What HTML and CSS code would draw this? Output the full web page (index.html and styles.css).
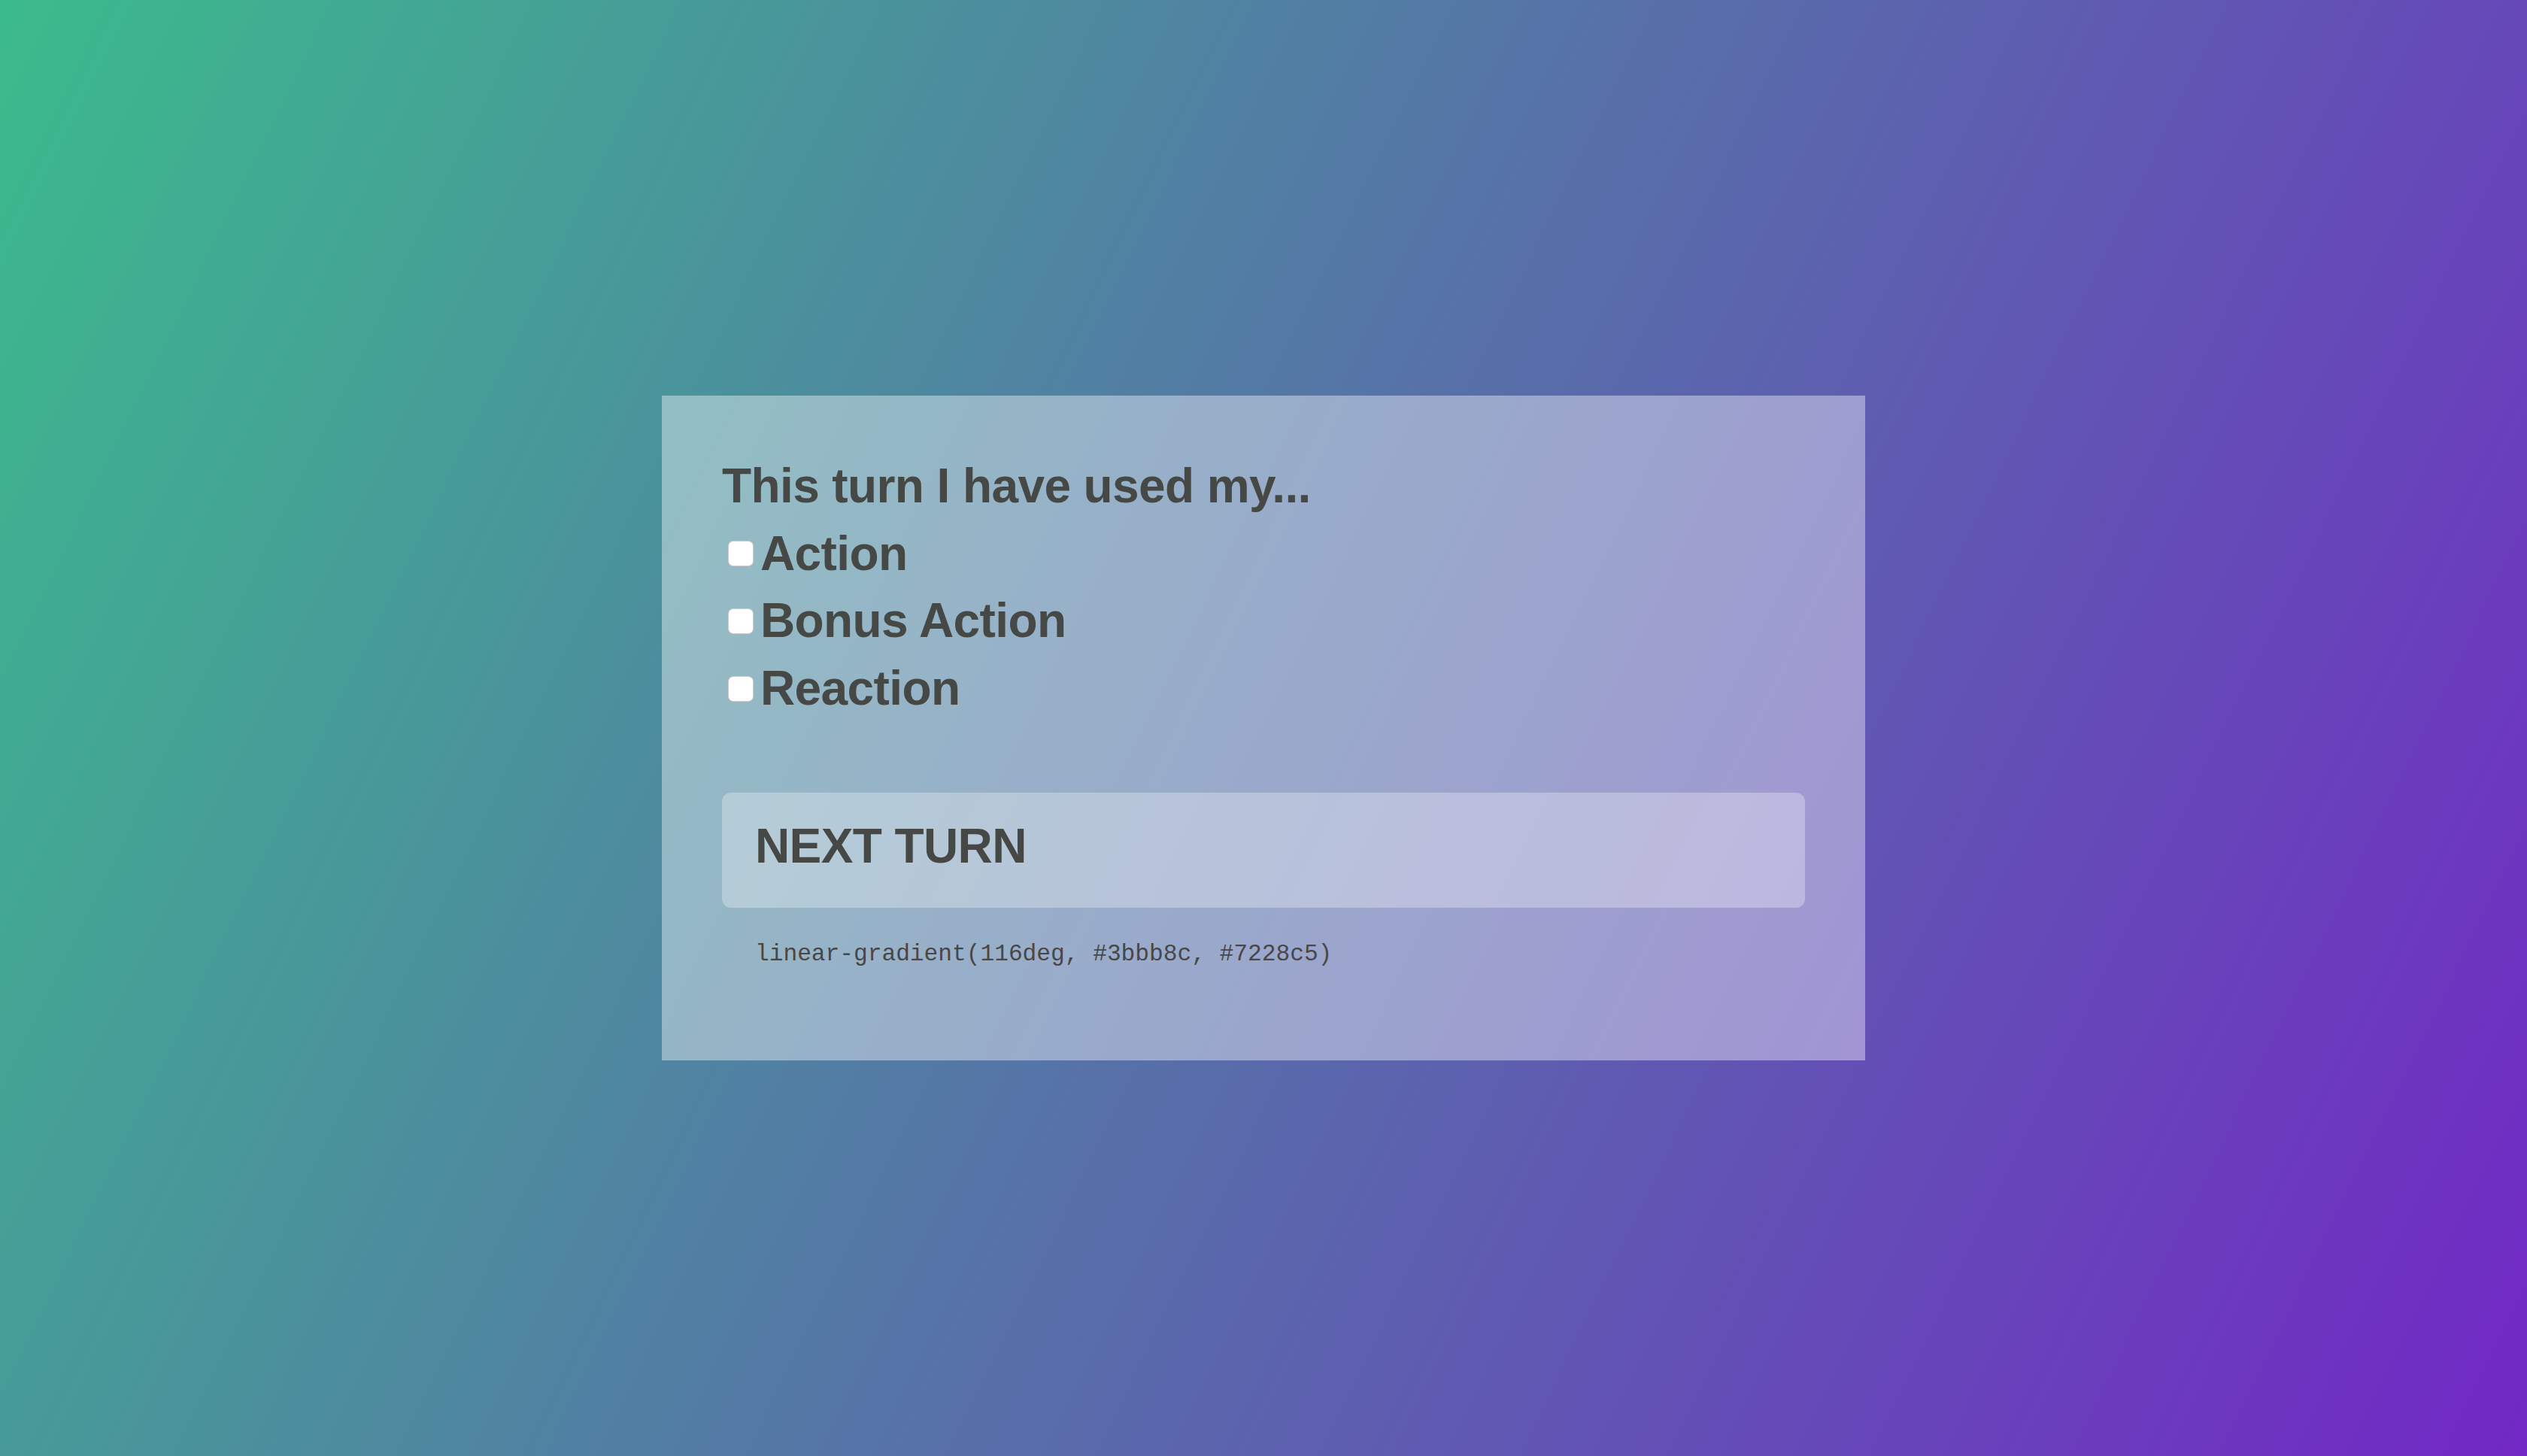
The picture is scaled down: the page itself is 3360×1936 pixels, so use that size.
FILE: index.html
```html
<!DOCTYPE html>
<html lang="en">
<head>
<meta charset="utf-8">
<title>Turn tracker</title>
<link rel="stylesheet" href="styles.css">
</head>
<body>
<main class="card">
  <h1 class="title">This turn I have used my...</h1>
  <label class="option"><span class="check"></span><span class="option-label">Action</span></label>
  <label class="option"><span class="check"></span><span class="option-label">Bonus Action</span></label>
  <label class="option"><span class="check"></span><span class="option-label">Reaction</span></label>
  <div class="next-btn">NEXT TURN</div>
  <code class="code">linear-gradient(116deg, #3bbb8c, #7228c5)</code>
</main>
</body>
</html>
```
FILE: styles.css
```css
html, body {
  margin: 0;
  padding: 0;
}
body {
  width: 100vw;
  height: 100vh;
  display: flex;
  align-items: center;
  justify-content: center;
  background: linear-gradient(116deg, #3bbb8c, #7228c5);
  font-family: "Liberation Sans", Arial, Helvetica, sans-serif;
  color: #464845;
}
.card {
  box-sizing: border-box;
  width: 1600px;
  padding: 76px 80px 124px;
  background: rgba(255, 255, 255, 0.4);
  display: flex;
  flex-direction: column;
}
.title {
  margin: 0;
  font-size: 64px;
  font-weight: 700;
  line-height: 89.6px;
  letter-spacing: -0.6px;
}
.option {
  display: flex;
  align-items: center;
  font-size: 64px;
  font-weight: 700;
  line-height: 89.6px;
  letter-spacing: -0.6px;
}
.check {
  box-sizing: border-box;
  width: 34px;
  height: 34px;
  margin: 0 9px 0 8px;
  background: #ffffff;
  border: 1px solid rgba(120, 110, 100, 0.35);
  border-radius: 7px;
  flex: none;
}
.next-btn {
  margin-top: 94px;
  padding: 27px 44px 36px;
  background: rgba(255, 255, 255, 0.3);
  border-radius: 12px;
  font-size: 64px;
  font-weight: 700;
  line-height: 89.6px;
  letter-spacing: -0.6px;
}
.code {
  display: block;
  margin-top: 44px;
  padding-left: 44px;
  font-family: "Liberation Mono", "Courier New", monospace;
  font-size: 31.2px;
  line-height: normal;
  color: #474747;
}
```
